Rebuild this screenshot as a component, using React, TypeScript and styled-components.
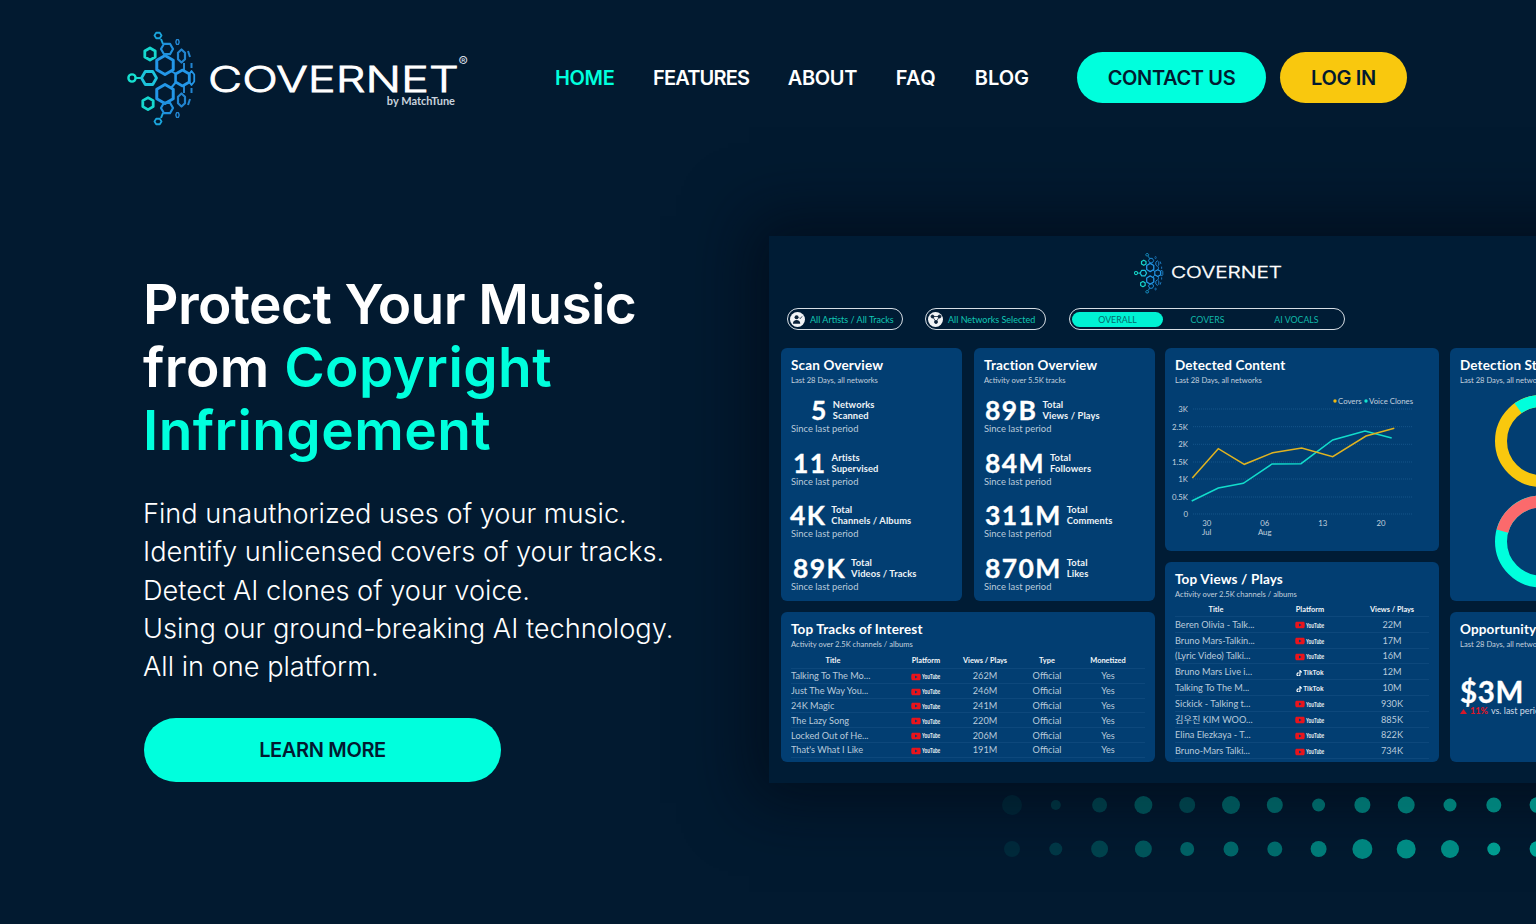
import React from 'react';
import styled, { createGlobalStyle } from 'styled-components';
import { FaTiktok, FaYoutube } from 'react-icons/fa';

const TEAL = '#00ffdd';
const YELLOW = '#f9c80e';
const NAVY = '#021a30';
const CARD = '#023e72';

const GlobalStyle = createGlobalStyle`
  html, body {
    margin: 0;
    padding: 0;
    background: ${NAVY};
  }
`;

const hexPoints = (cx: number, cy: number, r: number, sx = 1, pointy = false) => {
  const pts: string[] = [];
  for (let i = 0; i < 6; i++) {
    const a = (Math.PI / 3) * i + (pointy ? Math.PI / 6 : 0);
    pts.push(`${(cx + r * Math.cos(a) * sx).toFixed(2)},${(cy + r * Math.sin(a)).toFixed(2)}`);
  }
  return pts.join(' ');
};

type Hex = [number, number, number, number, boolean, string, number];

const HEXES: Hex[] = [
  [40, 33, 6, 1, true, '#16d8cf', 2.8],
  [38, 82.6, 6, 1, true, '#16d8cf', 2.8],
  [39, 57, 7.5, 1, false, '#1cc4dc', 2.8],
  [55, 44, 9.5, 1, true, '#2397e8', 3],
  [55, 73, 9.5, 1, true, '#2397e8', 3],
  [72.5, 57, 8, 1, true, '#2397e8', 2.6],
  [81.5, 57, 7, 0.45, true, '#2397e8', 1.8],
  [71.5, 35, 6.5, 0.62, true, '#2285d0', 2.2],
  [71.5, 79, 6.5, 0.62, true, '#2285d0', 2.2],
  [57, 28, 6, 1, false, '#1f90dc', 2.2],
  [57, 87, 6, 1, false, '#1f90dc', 2.2],
  [48, 14.5, 3.2, 1.1, false, '#1aa5dc', 1.8],
  [48, 100.5, 3.2, 1.1, false, '#1aa5dc', 1.8],
  [67.5, 21, 2.8, 0.6, false, '#2285d0', 1.4],
  [67.5, 94, 2.8, 0.6, false, '#2285d0', 1.4],
];

const LINKS = [
  [25.5, 57, 31.5, 57, '#16d8cf'],
  [51, 18, 53, 23, '#1aa5dc'],
  [51, 97, 53, 92, '#1aa5dc'],
  [61, 50, 66, 53, '#2397e8'],
  [61, 67, 66, 61, '#2397e8'],
  [74, 42, 74, 49, '#2285d0'],
  [74, 72, 74, 65, '#2285d0'],
  [78, 30, 80, 36, '#2285d0'],
  [78, 84, 80, 78, '#2285d0'],
  [81.5, 42, 81.5, 47, '#2285d0'],
  [81.5, 67, 81.5, 72, '#2285d0'],
] as const;

const Mark: React.FC<{ width: number }> = ({ width }) => (
  <svg width={width} height={width * (98 / 72)} viewBox="15 8 72 98" fill="none">
    {LINKS.map(([x1, y1, x2, y2, c], i) => (
      <line key={i} x1={x1} y1={y1} x2={x2} y2={y2} stroke={c} strokeWidth={2} />
    ))}
    <circle cx={22} cy={57} r={3.6} stroke="#16e0d0" strokeWidth={2.4} />
    {HEXES.map(([cx, cy, r, sx, pointy, c, sw], i) => (
      <polygon key={i} points={hexPoints(cx, cy, r, sx, pointy)} stroke={c} strokeWidth={sw} strokeLinejoin="round" />
    ))}
  </svg>
);

const Page = styled.div`
  position: relative;
  width: 1536px;
  height: 924px;
  overflow: hidden;
  background: ${NAVY};
  font-family: 'Inter', 'Liberation Sans', sans-serif;
  color: #fff;
`;

const Header = styled.header`
  display: flex;
  align-items: center;
  height: 97px;
  padding: 29px 0 0 125px;
`;

const Brand = styled.div`
  display: flex;
  align-items: center;
  gap: 11px;
  width: 343px;
  flex-shrink: 0;
`;

const WordBlock = styled.div`
  position: relative;
  width: 248px;
  padding-top: 17px;
`;

const Wordmark = styled.div<{ $size: number; $scale: number }>`
  font-family: 'Inter', sans-serif;
  font-weight: 300;
  font-size: ${(p) => p.$size}px;
  line-height: 0.8;
  color: #fff;
  white-space: nowrap;
  transform: scaleX(${(p) => p.$scale});
  transform-origin: left center;
  -webkit-text-stroke: ${(p) => (p.$size > 20 ? '0.8px' : '0.35px')} #fff;
`;

const ByLine = styled.div`
  font-family: 'Lato', sans-serif;
  font-size: 11px;
  font-weight: 700;
  color: #c8d2dc;
  text-align: right;
  margin-top: 1px;
  padding-right: 1px;
`;

const Registered = styled.span`
  position: absolute;
  top: 5px;
  right: -12px;
  font-size: 14px;
  color: #d8dfe6;
`;

const Nav = styled.nav`
  display: flex;
  align-items: center;
  justify-content: space-between;
  width: 474px;
  margin-left: 87px;
`;

const NavLink = styled.a<{ $active?: boolean; $track?: number }>`
  font-size: 20px;
  font-weight: 600;
  letter-spacing: ${(p) => p.$track ?? -0.35}px;
  color: ${(p) => (p.$active ? TEAL : '#fff')};
`;

const Actions = styled.div`
  display: flex;
  gap: 14px;
  margin-left: 48px;
`;

const PillButton = styled.button<{ $bg: string; $w: number; $h: number }>`
  width: ${(p) => p.$w}px;
  height: ${(p) => p.$h}px;
  border: none;
  border-radius: ${(p) => p.$h / 2}px;
  background: ${(p) => p.$bg};
  color: ${NAVY};
  font-family: inherit;
  font-size: 20px;
  font-weight: 600;
  letter-spacing: -0.35px;
  padding: 0;
`;

const Hero = styled.main`
  display: flex;
  margin-top: 110px;
`;

const Intro = styled.section`
  width: 769px;
  flex-shrink: 0;
  padding: 37px 0 0 143px;
  box-sizing: border-box;
`;

const Headline = styled.h1`
  margin: 0;
  font-size: 55px;
  line-height: 63px;
  font-weight: 600;
  letter-spacing: 0.45px;
  color: #fff;
  white-space: nowrap;
`;

const TightLine = styled.span`
  letter-spacing: -0.6px;
`;

const Accent = styled.span`
  color: ${TEAL};
`;

const Copy = styled.p`
  margin: 33px 0 0;
  font-size: 27.2px;
  line-height: 38.3px;
  font-weight: 300;
  color: #fff;
  white-space: nowrap;
`;

const LearnMore = styled(PillButton)`
  display: block;
  margin-top: 32px;
  margin-left: 1px;
`;

const Showcase = styled.section`
  flex-shrink: 0;
  width: 876px;
`;

const Dash = styled.div`
  box-sizing: border-box;
  width: 876px;
  height: 547px;
  padding: 16px 12px 0;
  background: #001c35;
  box-shadow: 0 0 60px 20px rgba(0, 8, 20, 0.6);
  font-family: 'Lato', 'Noto Sans CJK KR', sans-serif;
`;

const DashBrand = styled.div`
  display: flex;
  justify-content: center;
  align-items: center;
  gap: 7px;
  height: 42px;
`;

const DashWord = styled.div`
  width: 110px;
`;

const Filters = styled.div`
  display: flex;
  align-items: center;
  margin: 14px 0 0 6px;
`;

const Pill = styled.div<{ $w: number; $ml?: number }>`
  box-sizing: border-box;
  display: flex;
  align-items: center;
  gap: 5px;
  width: ${(p) => p.$w}px;
  height: 22px;
  margin-left: ${(p) => p.$ml ?? 0}px;
  padding-left: 2px;
  border: 1.5px solid #d6dde4;
  border-radius: 11px;
  font-size: 9px;
  color: #10c8b6;
  white-space: nowrap;
`;

const PillIcon = styled.span`
  display: flex;
  align-items: center;
  justify-content: center;
  width: 15px;
  height: 15px;
  border-radius: 50%;
  background: #f2f4f6;
  flex-shrink: 0;
`;

const Tabs = styled.div`
  box-sizing: border-box;
  display: grid;
  grid-template-columns: 91px 89px 89px;
  align-items: center;
  width: 276px;
  height: 22px;
  margin-left: 23px;
  padding-left: 2px;
  border: 1.5px solid #d6dde4;
  border-radius: 11px;
`;

const Tab = styled.div<{ $active?: boolean }>`
  height: 15px;
  line-height: 15px;
  border-radius: 8px;
  text-align: center;
  font-size: 8.8px;
  color: ${(p) => (p.$active ? '#036b6c' : '#10b8aa')};
  background: ${(p) => (p.$active ? '#00f2d4' : 'transparent')};
`;

const Board = styled.div`
  display: flex;
  align-items: stretch;
  gap: 10px;
  margin-top: 18px;
`;

const LeftGroup = styled.div`
  width: 374px;
  flex-shrink: 0;
  display: flex;
  flex-direction: column;
  gap: 11px;
`;

const StatColumns = styled.div`
  display: grid;
  grid-template-columns: 181px 181px;
  gap: 12px;
`;

const MiddleColumn = styled.div`
  width: 274px;
  flex-shrink: 0;
  display: flex;
  flex-direction: column;
  gap: 11px;
`;

const RightColumn = styled.div`
  flex: 1;
  min-width: 0;
  margin-left: 1px;
  display: flex;
  flex-direction: column;
  gap: 11px;
`;

const Card = styled.div<{ $h: number }>`
  box-sizing: border-box;
  height: ${(p) => p.$h}px;
  padding: 9px 10px 0;
  background: ${CARD};
  border-radius: 6px;
  overflow: hidden;
`;

const CardTitle = styled.div`
  font-size: 13.5px;
  line-height: 16px;
  font-weight: 700;
  letter-spacing: 0.15px;
  color: #fff;
  white-space: nowrap;
`;

const CardSub = styled.div`
  margin-top: 2px;
  font-size: 7.6px;
  line-height: 10px;
  color: #c3d1de;
  white-space: nowrap;
`;

const Stats = styled.div`
  display: flex;
  flex-direction: column;
  gap: 15.7px;
  margin-top: 13px;
`;

const StatTop = styled.div<{ $indent: number }>`
  display: flex;
  align-items: center;
  gap: 5px;
  height: 24px;
  margin-left: ${(p) => p.$indent}px;
`;

const StatValue = styled.div`
  font-size: 26.5px;
  line-height: 24px;
  font-weight: 700;
  letter-spacing: 1.4px;
  color: #fff;
  -webkit-text-stroke: 0.3px #fff;
`;

const StatLabel = styled.div`
  font-size: 9.4px;
  line-height: 11px;
  font-weight: 700;
  letter-spacing: 0.1px;
  color: #eef3f7;
  white-space: nowrap;
`;

const StatNote = styled.div`
  margin-top: 1px;
  font-size: 9.4px;
  line-height: 12px;
  color: #b9cadb;
`;

const Row = styled.div<{ $cols: string; $h: number; $head?: boolean }>`
  display: grid;
  grid-template-columns: ${(p) => p.$cols};
  align-items: center;
  height: ${(p) => p.$h}px;
  border-bottom: 1px solid rgba(120, 170, 215, 0.1);
  box-sizing: border-box;
  font-size: ${(p) => (p.$head ? 7.4 : 9.2)}px;
  font-weight: ${(p) => (p.$head ? 700 : 400)};
  color: ${(p) => (p.$head ? '#f2f6f9' : '#b9cadb')};
  white-space: nowrap;
`;

const TableHead = styled.div<{ $gap: number }>`
  margin-top: ${(p) => p.$gap}px;
`;

const Cell = styled.div<{ $pad?: number }>`
  text-align: center;
  padding-left: ${(p) => p.$pad ?? 0}px;
  overflow: hidden;
`;

const TitleCell = styled.div`
  text-align: left;
  overflow: hidden;
`;

const HeadTitle = styled.div<{ $w: number }>`
  width: ${(p) => p.$w}px;
  text-align: center;
`;

const Platform = styled.span`
  display: inline-flex;
  align-items: center;
  gap: 1px;
  vertical-align: middle;
`;

const PlatformName = styled.span<{ $narrow?: boolean }>`
  display: inline-block;
  width: ${(p) => (p.$narrow ? 19 : 21)}px;
  font-family: 'Liberation Sans', sans-serif;
  font-size: 6.5px;
  font-weight: 700;
  text-align: left;
  color: #e6ecf1;
  transform: scaleX(${(p) => (p.$narrow ? 0.68 : 1)});
  transform-origin: left center;
`;

const ChartWrap = styled.div`
  margin: 10px -10px 0;
`;

const ChartText = styled.text`
  font-size: 7.8px;
  fill: #c3d1de;
`;

const DonutChart = styled.svg`
  display: block;
  margin: 10px 0 0 -10px;
`;

const BigMoney = styled.div`
  margin-top: 30px;
  font-size: 29.5px;
  line-height: 26px;
  font-weight: 700;
  letter-spacing: 0.6px;
  color: #fff;
  -webkit-text-stroke: 0.3px #fff;
`;

const Trend = styled.div`
  display: flex;
  align-items: center;
  gap: 3px;
  margin-top: 0;
  font-size: 9px;
  line-height: 12px;
  color: #cfdbe6;
  white-space: nowrap;
`;

const TrendUp = styled.span`
  color: #d8182a;
  font-weight: 900;
`;

const Dots = styled.svg`
  display: block;
  margin: 2px 0 0 231px;
`;

const STATS_A = [
  { v: '5', l: ['Networks', 'Scanned'], i: 20 },
  { v: '11', l: ['Artists', 'Supervised'], i: 2 },
  { v: '4K', l: ['Total', 'Channels / Albums'], i: -1 },
  { v: '89K', l: ['Total', 'Videos / Tracks'], i: 2 },
];

const STATS_B = [
  { v: '89B', l: ['Total', 'Views / Plays'], i: 1 },
  { v: '84M', l: ['Total', 'Followers'], i: 1 },
  { v: '311M', l: ['Total', 'Comments'], i: 1 },
  { v: '870M', l: ['Total', 'Likes'], i: 1 },
];

const TRACKS = [
  ['Talking To The Mo...', '262M'],
  ['Just The Way You...', '246M'],
  ['24K Magic', '241M'],
  ['The Lazy Song', '220M'],
  ['Locked Out of He...', '206M'],
  ["That's What I Like", '191M'],
];

const VIEWS: [string, 'yt' | 'tt', string][] = [
  ['Beren Olivia - Talk...', 'yt', '22M'],
  ['Bruno Mars-Talkin...', 'yt', '17M'],
  ['(Lyric Video) Talki...', 'yt', '16M'],
  ['Bruno Mars Live i...', 'tt', '12M'],
  ['Talking To The M...', 'tt', '10M'],
  ['Sickick - Talking t...', 'yt', '930K'],
  ['김우진 KIM WOO...', 'yt', '885K'],
  ['Elina Elezkaya - T...', 'yt', '822K'],
  ['Bruno-Mars Talki...', 'yt', '734K'],
];

const TRACK_COLS = '100px 70px 48px 76px 46px 21px';
const VIEW_COLS = '104px 62px 86px';

const COVERS = '27.3,83 53.3,53.7 79.3,69.3 107.7,57.7 136.7,53 167.7,61.7 201,41 229.3,33.3';
const CLONES = '26.7,106 53.3,93 78.3,88.3 107,69 136,68.7 167.7,45 200,36 226.7,43';
const Y_AXIS: [string, number][] = [
  ['3K', 14],
  ['2.5K', 31.7],
  ['2K', 49.3],
  ['1.5K', 67],
  ['1K', 84],
  ['0.5K', 102],
  ['0', 119],
];

const DOT_ROWS = [
  { y: 20, r: [10, 5, 7.5, 9, 8, 9, 8, 6.5, 8, 8.5, 6.5, 7.5, 8], o: [0.06, 0.12, 0.17, 0.25, 0.2, 0.3, 0.34, 0.38, 0.44, 0.46, 0.5, 0.52, 0.58] },
  { y: 64, r: [8, 6.5, 8.5, 8.5, 7, 7.5, 7.5, 8, 10, 9.5, 9, 6.5, 8], o: [0.08, 0.15, 0.2, 0.29, 0.35, 0.38, 0.4, 0.48, 0.53, 0.56, 0.56, 0.64, 0.68] },
];

const YouTube = () => (
  <Platform>
    <FaYoutube size={10} color="#e8141c" />
    <PlatformName $narrow>YouTube</PlatformName>
  </Platform>
);

const TikTok = () => (
  <Platform>
    <FaTiktok size={6.5} color="#fff" />
    <PlatformName>TikTok</PlatformName>
  </Platform>
);

const Stat: React.FC<{ v: string; l: string[]; i: number }> = ({ v, l, i }) => (
  <div>
    <StatTop $indent={i}>
      <StatValue>{v}</StatValue>
      <StatLabel>
        {l[0]}
        <br />
        {l[1]}
      </StatLabel>
    </StatTop>
    <StatNote>Since last period</StatNote>
  </div>
);

const Chart = () => (
  <svg width={274} height={150} viewBox="0 0 274 150">
    {Y_AXIS.map(([label, y]) => (
      <g key={label}>
        <line x1={28} x2={248} y1={y} y2={y} stroke="#1a5a90" strokeWidth={0.8} strokeDasharray="1 1" />
        <ChartText x={23} y={y + 3} textAnchor="end">
          {label}
        </ChartText>
      </g>
    ))}
    <ChartText x={41.7} y={131} textAnchor="middle">30</ChartText>
    <ChartText x={41.7} y={140} textAnchor="middle">Jul</ChartText>
    <ChartText x={99.7} y={131} textAnchor="middle">06</ChartText>
    <ChartText x={99.7} y={140} textAnchor="middle">Aug</ChartText>
    <ChartText x={157.7} y={131} textAnchor="middle">13</ChartText>
    <ChartText x={216} y={131} textAnchor="middle">20</ChartText>
    <circle cx={170} cy={6} r={1.7} fill="#f2b90f" />
    <ChartText x={173} y={9}>Covers</ChartText>
    <circle cx={201} cy={6} r={1.7} fill="#12e2cf" />
    <ChartText x={204} y={9}>Voice Clones</ChartText>
    <polyline points={CLONES} fill="none" stroke="#12dccb" strokeWidth={1.5} />
    <polyline points={COVERS} fill="none" stroke="#e0b320" strokeWidth={1.5} />
  </svg>
);

const Donuts = () => (
  <DonutChart width={182} height={205} viewBox="0 0 182 205">
    <circle cx={91} cy={46} r={40} fill="none" stroke={YELLOW} strokeWidth={12} />
    <path d="M68 13.2 A40 40 0 0 1 131 46" fill="none" stroke={TEAL} strokeWidth={12} />
    <circle cx={91} cy={146.5} r={40} fill="none" stroke={TEAL} strokeWidth={12} />
    <path d="M52.4 136.1 A40 40 0 0 1 131 146.5" fill="none" stroke="#fb6a6c" strokeWidth={12} />
  </DonutChart>
);

const App: React.FC = () => {
  return (
    <Page>
      <GlobalStyle />
      <Header>
        <Brand>
          <Mark width={72} />
          <WordBlock>
            <Wordmark $size={35} $scale={1.34}>
              COVERNET
            </Wordmark>
            <ByLine>by MatchTune</ByLine>
            <Registered>®</Registered>
          </WordBlock>
        </Brand>
        <Nav>
          <NavLink $active>HOME</NavLink>
          <NavLink $track={-0.85}>FEATURES</NavLink>
          <NavLink>ABOUT</NavLink>
          <NavLink $track={0.4}>FAQ</NavLink>
          <NavLink $track={0}>BLOG</NavLink>
        </Nav>
        <Actions>
          <PillButton $bg={TEAL} $w={189} $h={51}>
            CONTACT US
          </PillButton>
          <PillButton $bg={YELLOW} $w={127} $h={51}>
            LOG IN
          </PillButton>
        </Actions>
      </Header>

      <Hero>
        <Intro>
          <Headline>
            <TightLine>Protect Your Music</TightLine>
            <br />
            from <Accent>Copyright</Accent>
            <br />
            <Accent>Infringement</Accent>
          </Headline>
          <Copy>
            Find unauthorized uses of your music.
            <br />
            Identify unlicensed covers of your tracks.
            <br />
            Detect AI clones of your voice.
            <br />
            Using our ground-breaking AI technology.
            <br />
            All in one platform.
          </Copy>
          <LearnMore $bg={TEAL} $w={357} $h={64}>
            LEARN MORE
          </LearnMore>
        </Intro>

        <Showcase>
          <Dash>
            <DashBrand>
              <Mark width={31} />
              <DashWord>
                <Wordmark $size={15.5} $scale={1.34}>
                  COVERNET
                </Wordmark>
              </DashWord>
            </DashBrand>

            <Filters>
              <Pill $w={116}>
                <PillIcon>
                  <svg width={11} height={11} viewBox="0 0 12 12" fill="#0c2238">
                    <circle cx={5} cy={3.6} r={2.2} />
                    <path d="M1 10.5c0-2.6 1.8-4 4-4s4 1.4 4 4z" />
                    <path d="M8 4l1 1 2-2.4" fill="none" stroke="#0c2238" strokeWidth={0.9} />
                  </svg>
                </PillIcon>
                All Artists / All Tracks
              </Pill>
              <Pill $w={121} $ml={22}>
                <PillIcon>
                  <svg width={12} height={12} viewBox="0 0 12 12" fill="#0c2238" stroke="#0c2238" strokeWidth={0.8}>
                    <line x1={2.5} y1={3.5} x2={9.5} y2={3.5} />
                    <line x1={2.5} y1={3.5} x2={6} y2={9} />
                    <line x1={9.5} y1={3.5} x2={6} y2={9} />
                    <circle cx={2.5} cy={3.5} r={1.5} />
                    <circle cx={9.5} cy={3.5} r={1.5} />
                    <circle cx={6} cy={9} r={1.5} />
                  </svg>
                </PillIcon>
                All Networks Selected
              </Pill>
              <Tabs>
                <Tab $active>OVERALL</Tab>
                <Tab>COVERS</Tab>
                <Tab>AI VOCALS</Tab>
              </Tabs>
            </Filters>

            <Board>
              <LeftGroup>
                <StatColumns>
                  <Card $h={253}>
                    <CardTitle>Scan Overview</CardTitle>
                    <CardSub>Last 28 Days, all networks</CardSub>
                    <Stats>
                      {STATS_A.map((s) => (
                        <Stat key={s.v} {...s} />
                      ))}
                    </Stats>
                  </Card>
                  <Card $h={253}>
                    <CardTitle>Traction Overview</CardTitle>
                    <CardSub>Activity over 5.5K tracks</CardSub>
                    <Stats>
                      {STATS_B.map((s) => (
                        <Stat key={s.v} {...s} />
                      ))}
                    </Stats>
                  </Card>
                </StatColumns>
                <Card $h={150}>
                  <CardTitle>Top Tracks of Interest</CardTitle>
                  <CardSub>Activity over 2.5K channels / albums</CardSub>
                  <TableHead $gap={4}>
                    <Row $cols={TRACK_COLS} $h={16} $head>
                      <HeadTitle $w={84}>Title</HeadTitle>
                      <Cell>Platform</Cell>
                      <Cell>Views / Plays</Cell>
                      <Cell>Type</Cell>
                      <Cell>Monetized</Cell>
                      <span />
                    </Row>
                  </TableHead>
                  {TRACKS.map(([title, views]) => (
                    <Row key={title} $cols={TRACK_COLS} $h={14.8}>
                      <TitleCell>{title}</TitleCell>
                      <Cell>
                        <YouTube />
                      </Cell>
                      <Cell>{views}</Cell>
                      <Cell>Official</Cell>
                      <Cell>Yes</Cell>
                      <span />
                    </Row>
                  ))}
                </Card>
              </LeftGroup>

              <MiddleColumn>
                <Card $h={203}>
                  <CardTitle>Detected Content</CardTitle>
                  <CardSub>Last 28 Days, all networks</CardSub>
                  <ChartWrap>
                    <Chart />
                  </ChartWrap>
                </Card>
                <Card $h={200}>
                  <CardTitle>Top Views / Plays</CardTitle>
                  <CardSub>Activity over 2.5K channels / albums</CardSub>
                  <TableHead $gap={3}>
                    <Row $cols={VIEW_COLS} $h={15} $head>
                      <HeadTitle $w={82}>Title</HeadTitle>
                      <Cell>Platform</Cell>
                      <Cell $pad={16}>Views / Plays</Cell>
                    </Row>
                  </TableHead>
                  {VIEWS.map(([title, platform, views]) => (
                    <Row key={title} $cols={VIEW_COLS} $h={15.8}>
                      <TitleCell>{title}</TitleCell>
                      <Cell>{platform === 'yt' ? <YouTube /> : <TikTok />}</Cell>
                      <Cell $pad={16}>{views}</Cell>
                    </Row>
                  ))}
                </Card>
              </MiddleColumn>

              <RightColumn>
                <Card $h={253}>
                  <CardTitle>Detection Status</CardTitle>
                  <CardSub>Last 28 Days, all networks</CardSub>
                  <Donuts />
                </Card>
                <Card $h={150}>
                  <CardTitle>Opportunity Value</CardTitle>
                  <CardSub>Last 28 Days, all networks</CardSub>
                  <BigMoney>$3M</BigMoney>
                  <Trend>
                    <svg width={7} height={5} viewBox="0 0 7 5">
                      <path d="M3.5 0L7 5H0z" fill="#d8182a" />
                    </svg>
                    <TrendUp>11%</TrendUp>
                    <span>vs. last period</span>
                  </Trend>
                </Card>
              </RightColumn>
            </Board>
          </Dash>

          <Dots width={645} height={84} viewBox="0 0 645 84">
            {DOT_ROWS.map((row) =>
              row.r.map((r, i) => (
                <circle key={`${row.y}-${i}`} cx={12 + i * 43.8} cy={row.y} r={r} fill="#00e6c8" opacity={row.o[i]} />
              )),
            )}
          </Dots>
        </Showcase>
      </Hero>
    </Page>
  );
};

export default App;
